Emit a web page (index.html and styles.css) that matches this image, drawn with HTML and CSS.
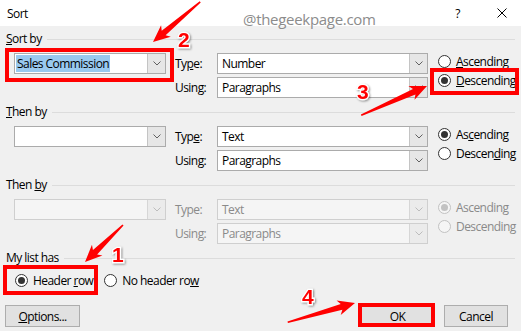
FILE: index.html
```html
<!DOCTYPE html>
<html lang="en">
<head>
    <meta charset="UTF-8">
    <title>Sort</title>
    <link rel="stylesheet" href="styles.css">
</head>
<body>
    <div class="dialog">
        <div class="titlebar">
            <span class="title">Sort</span>
            <span class="help">?</span>
            <span class="close">
                <svg width="10" height="10" viewBox="0 0 10 10"><path d="M0.5 0.5L9.5 9.5M9.5 0.5L0.5 9.5" stroke="#000" stroke-width="1" fill="none"/></svg>
            </span>
        </div>

        <div class="content">
            <section class="group">
                <div class="group-head"><span><u>S</u>ort by</span></div>
                <div class="group-body">
                    <div class="combo key"><span class="value"><span class="sel">Sales Commission</span></span><span class="drop"></span></div>
                    <label class="field-label">Ty<u>p</u>e:</label>
                    <div class="combo"><span class="value">Number</span><span class="drop"></span></div>
                    <div class="radios">
                        <div class="radio"><span class="dot"></span><span><u>A</u>scending</span></div>
                        <div class="radio checked"><span class="dot"></span><span><u>D</u>escending</span></div>
                    </div>
                    <label class="field-label using">Using:</label>
                    <div class="combo"><span class="value">Paragraphs</span><span class="drop"></span></div>
                </div>
            </section>

            <section class="group">
                <div class="group-head"><span><u>T</u>hen by</span></div>
                <div class="group-body">
                    <div class="combo key"><span class="value"></span><span class="drop"></span></div>
                    <label class="field-label">Typ<u>e</u>:</label>
                    <div class="combo"><span class="value">Text</span><span class="drop"></span></div>
                    <div class="radios">
                        <div class="radio checked"><span class="dot"></span><span>As<u>c</u>ending</span></div>
                        <div class="radio"><span class="dot"></span><span>Descen<u>d</u>ing</span></div>
                    </div>
                    <label class="field-label using">Using:</label>
                    <div class="combo"><span class="value">Paragraphs</span><span class="drop"></span></div>
                </div>
            </section>

            <section class="group disabled">
                <div class="group-head"><span>Then <u>b</u>y</span></div>
                <div class="group-body">
                    <div class="combo key"><span class="value"></span><span class="drop"></span></div>
                    <label class="field-label">Type:</label>
                    <div class="combo"><span class="value">Text</span><span class="drop"></span></div>
                    <div class="radios">
                        <div class="radio checked"><span class="dot"></span><span>Ascending</span></div>
                        <div class="radio"><span class="dot"></span><span>Descending</span></div>
                    </div>
                    <label class="field-label using">Using:</label>
                    <div class="combo"><span class="value">Paragraphs</span><span class="drop"></span></div>
                </div>
            </section>

            <section class="group last">
                <div class="group-head"><span>My list has</span></div>
                <div class="header-options">
                    <div class="radio checked"><span class="dot"></span><span>Header <u>r</u>ow</span></div>
                    <div class="radio"><span class="dot"></span><span>No header ro<u>w</u></span></div>
                </div>
            </section>

            <div class="buttons">
                <button class="btn options"><u>O</u>ptions...</button>
                <span class="spacer"></span>
                <button class="btn ok">OK</button>
                <button class="btn cancel">Cancel</button>
            </div>
        </div>

        <div class="watermark">@thegeekpage.com</div>

        <!-- annotation layer: red boxes, arrows and step numbers -->
        <svg class="marks" width="521" height="331" viewBox="0 0 521 331">
            <defs>
                <filter id="shadow" x="-20%" y="-20%" width="140%" height="140%">
                    <feDropShadow dx="1" dy="1" stdDeviation="0.8" flood-color="#000" flood-opacity="0.45"/>
                </filter>
            </defs>
            <g fill="none" stroke="#ff0000" stroke-width="4">
                <rect x="7" y="50" width="165" height="30"/>
                <rect x="432" y="70" width="85" height="23"/>
                <rect x="5" y="267" width="91" height="26"/>
                <rect x="360" y="305" width="73" height="20"/>
            </g>
            <g fill="#ff0000">
                <polygon transform="translate(153,42) rotate(139.6)" points="0,0 -17,-7.5 -14,-3 -62,-0.8 -62,0.8 -14,3 -17,7.5"/>
                <polygon transform="translate(427,86) rotate(-24)" points="0,0 -17,-7.5 -14,-3 -72,-0.8 -72,0.8 -14,3 -17,7.5"/>
                <polygon transform="translate(85,262) rotate(135.8)" points="0,0 -17,-7.5 -14,-3 -53,-0.8 -53,0.8 -14,3 -17,7.5"/>
                <polygon transform="translate(355,303) rotate(-16)" points="0,0 -17,-7.5 -14,-3 -70,-0.8 -70,0.8 -14,3 -17,7.5"/>
            </g>
            <g class="num" filter="url(#shadow)">
                <text x="178" y="47">2</text>
                <text x="357" y="99">3</text>
                <text x="112" y="262">1</text>
                <text x="302" y="304">4</text>
            </g>
        </svg>
    </div>
</body>
</html>
```

FILE: styles.css
```css
body {
    margin: 0;
    font-family: "Open Sans", "Noto Sans", sans-serif;
    font-size: 12px;
    letter-spacing: -0.55px;
    color: #000;
    background: #f0f0f0;
}

.dialog {
    position: relative;
    width: 521px;
    height: 331px;
    overflow: hidden;
    background: #f0f0f0;
}

.titlebar {
    height: 26px;
    background: #fff;
    display: flex;
    align-items: center;
    padding: 0 14px 0 7px;
}

.title {
    flex: 1;
}

.help {
    margin-right: 37px;
    font-size: 12px;
}

.close svg {
    display: block;
}

.content {
    padding: 6px 6px 0 6px;
}

.group {
    margin-bottom: 7px;
}

.group-head {
    display: flex;
    align-items: center;
    height: 14px;
    line-height: 14px;
}

.group-head::after {
    content: "";
    flex: 1;
    height: 1px;
    background: #dcdcdc;
    margin-left: 5px;
}

.group-body {
    display: grid;
    grid-template-columns: 152px 51px 211px 1fr;
    grid-template-rows: 21px 21px;
    row-gap: 3px;
    margin-top: 7px;
    padding-left: 8px;
}

.field-label {
    padding-left: 9px;
    line-height: 21px;
}

.field-label.using {
    grid-column: 2;
}

.key {
    grid-column: 1;
}

.combo {
    display: flex;
    height: 21px;
    box-sizing: border-box;
    border: 1px solid #ababab;
    background: #fff;
}

.combo .value {
    flex: 1;
    padding-left: 4px;
    line-height: 19px;
    white-space: nowrap;
    overflow: hidden;
}

.combo.key .value {
    padding-left: 1px;
}

.sel {
    background: #99c9ef;
    padding: 0 1px;
}

.drop {
    width: 17px;
    background: #e6e6e6 url("data:image/svg+xml,%3Csvg xmlns='http://www.w3.org/2000/svg' width='8' height='5'%3E%3Cpath d='M0.5 0.5L4 4L7.5 0.5' fill='none' stroke='%23606060'/%3E%3C/svg%3E") no-repeat center;
    border-left: 1px solid #c4c4c4;
}

.radios {
    grid-column: 4;
    grid-row: 1 / span 2;
    display: flex;
    flex-direction: column;
    gap: 3px;
    padding-left: 10px;
}

.radio {
    display: flex;
    align-items: center;
    height: 16px;
    gap: 5px;
    white-space: nowrap;
}

.dot {
    width: 13px;
    height: 13px;
    box-sizing: border-box;
    border: 1px solid #333;
    border-radius: 50%;
    background: #fff;
    display: flex;
    align-items: center;
    justify-content: center;
}

.radio.checked .dot::after {
    content: "";
    width: 7px;
    height: 7px;
    border-radius: 50%;
    background: #333;
}

/* third section is greyed out */
.disabled .group-body,
.disabled .group-body .combo {
    color: #8a8a8a;
}

.disabled .combo {
    background: #f5f5f5;
    border-color: #cfcfcf;
}

.disabled .drop {
    background-color: #ebebeb;
    border-left-color: #d6d6d6;
    background-image: url("data:image/svg+xml,%3Csvg xmlns='http://www.w3.org/2000/svg' width='8' height='5'%3E%3Cpath d='M0.5 0.5L4 4L7.5 0.5' fill='none' stroke='%23bcbcbc'/%3E%3C/svg%3E");
}

.disabled .dot {
    border-color: #c2c2c2;
    background: #f5f5f5;
}

.disabled .radio.checked .dot::after {
    background: #c2c2c2;
}

.header-options {
    display: flex;
    gap: 11px;
    margin-top: 7px;
    padding-left: 9px;
}

.buttons {
    display: flex;
    margin-top: 17px;
    padding-right: 7px;
}

.spacer {
    flex: 1;
}

.btn {
    height: 22px;
    box-sizing: border-box;
    border: 1px solid #adadad;
    background: #e1e1e1;
    font-family: "Open Sans", "Noto Sans", sans-serif;
    font-size: 12px;
    letter-spacing: -0.55px;
    color: #000;
    padding: 0;
}

.options {
    width: 75px;
    margin-left: -1px;
}

.ok {
    width: 75px;
    margin-right: 9px;
}

.cancel {
    width: 64px;
}

.watermark {
    position: absolute;
    left: 243px;
    top: 9px;
    font-size: 15px;
    letter-spacing: -0.3px;
    color: #8c8c8c;
}

.marks {
    position: absolute;
    left: 0;
    top: 0;
    pointer-events: none;
}

.num text {
    font-family: "Liberation Sans", Arial, sans-serif;
    font-weight: bold;
    font-size: 21px;
    letter-spacing: 0;
    fill: #ff0000;
    stroke: #fff;
    stroke-width: 2.5px;
    paint-order: stroke;
}
```
